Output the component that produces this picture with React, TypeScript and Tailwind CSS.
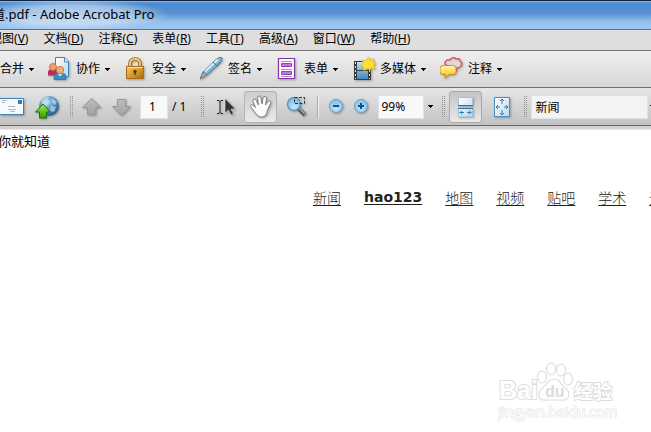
import type { ReactNode } from "react";

const UI_FONT = "font-['Noto_Sans','Noto_Sans_CJK_SC',sans-serif]";

function Caret() {
  return (
    <svg width="5" height="3" viewBox="0 0 5 3" className="shrink-0" aria-hidden="true" shapeRendering="crispEdges">
      <path d="M0 0h5v1h-1v1h-1v1h-1v-1h-1v-1h-1z" fill="#000" />
    </svg>
  );
}

function Grip() {
  return (
    <svg width="3" height="22" viewBox="0 0 3 22" className="shrink-0" aria-hidden="true" shapeRendering="crispEdges">
      <path d="M.5 0v22M2.5 0v22" stroke="#909090" strokeDasharray="1 1" />
    </svg>
  );
}

function Defs() {
  return (
    <svg className="absolute h-0 w-0" aria-hidden="true">
      <defs>
        <linearGradient id="gold" x1="0" y1="0" x2="1" y2="1">
          <stop offset="0" stopColor="#f5cf73" /><stop offset=".5" stopColor="#d99a2b" /><stop offset="1" stopColor="#a86808" />
        </linearGradient>
        <linearGradient id="blue" x1="0" y1="0" x2="0" y2="1">
          <stop offset="0" stopColor="#c4e0f2" /><stop offset="1" stopColor="#3f88bd" />
        </linearGradient>
        <linearGradient id="page" x1="0" y1="0" x2="1" y2="1">
          <stop offset="0" stopColor="#fff" /><stop offset="1" stopColor="#b9d9ee" />
        </linearGradient>
        <linearGradient id="green" x1="0" y1="0" x2="0" y2="1">
          <stop offset="0" stopColor="#a5f04a" /><stop offset="1" stopColor="#2d9a06" />
        </linearGradient>
        <linearGradient id="yellow" x1="0" y1="0" x2="0" y2="1">
          <stop offset="0" stopColor="#fff7a8" /><stop offset="1" stopColor="#fbb40c" />
        </linearGradient>
        <linearGradient id="grey" x1="0" y1="0" x2="0" y2="1">
          <stop offset="0" stopColor="#bdbdbd" /><stop offset="1" stopColor="#a2a2a2" />
        </linearGradient>
        <radialGradient id="globe" cx=".4" cy=".3" r=".7">
          <stop offset="0" stopColor="#b5d9f0" /><stop offset=".5" stopColor="#5d9ccc" /><stop offset="1" stopColor="#205c94" />
        </radialGradient>
        <radialGradient id="lens" cx=".5" cy=".7" r=".7">
          <stop offset="0" stopColor="#c8e8fa" /><stop offset="1" stopColor="#75b2db" />
        </radialGradient>
      </defs>
    </svg>
  );
}

function Icon({ w, h, children }: { w: number; h: number; children: ReactNode }) {
  return (
    <svg
      width={w}
      height={h}
      viewBox={`0 0 ${w} ${h}`}
      fill="none"
      aria-hidden="true"
      className="shrink-0 drop-shadow-[1px_1px_1px_rgba(0,0,0,0.3)]"
    >
      {children}
    </svg>
  );
}

const CollabIcon = () => (
  <Icon w={24} h={24}>
    <path d="M7.500 .500h9l4 4v15h-13z" fill="url(#page)" stroke="#3f88bd" />
    <path d="M16.500 .500v4.500h4" fill="#e8f4fb" stroke="#3f88bd" />
    <path d="M0 18.500v-3q0-3 3-3h4q3 0 3 3v3z" fill="#c02a5c" />
    <circle cx="5" cy="10" r="3.500" fill="#eca36f" stroke="#b96331" strokeWidth=".7" />
    <path d="M6 22.500v-3q0-3 3-3h6q3 0 3 3v3z" fill="#3d8dc4" stroke="#236998" strokeWidth=".6" />
    <path d="M9.500 16.500l2.500 3 2.500-3z" fill="#d8ebf5" />
    <circle cx="12" cy="13" r="3.700" fill="#f0ae7b" stroke="#b96331" strokeWidth=".7" />
  </Icon>
);

const LockIcon = () => (
  <Icon w={24} h={24}>
    <path d="M6 11V7q0-5 5-5t5 5v4" stroke="#9a681b" strokeWidth="3.600" />
    <path d="M6 11V7q0-5 5-5t5 5v4" stroke="#ecd184" strokeWidth="1.800" />
    <path d="M2.500 9.500h17v12h-17z" fill="url(#gold)" stroke="#a86b18" />
    <path d="M3.500 10.500h15" stroke="#ffe6a1" />
    <circle cx="11" cy="14.500" r="1.700" fill="#583806" />
    <path d="M11 14v4" stroke="#583806" strokeWidth="1.500" />
  </Icon>
);

const PenIcon = () => (
  <Icon w={24} h={24}>
    <path d="M0 22l3-7L16 2.500q4-3 5.500-2t-.5 4.500L8 17z" fill="#82b4d6" stroke="#547184" strokeWidth=".9" />
    <path d="M5 14.500L18 2.500" stroke="#d8effc" strokeWidth="1.800" />
    <path d="M0 22l3-7 4 3z" fill="#a6a8aa" stroke="#666" strokeWidth=".6" />
    <path d="M13 5l4 4 3.500-4" stroke="#536776" />
  </Icon>
);

const FormIcon = () => (
  <Icon w={24} h={24}>
    <path d="M2.500 1.500h16v20h-16z" fill="#fff" stroke="#8434a8" strokeWidth="1.200" />
    <path d="M5 4.500h11M5 12.500h11M5 19.500h11" stroke="#9ba0aa" />
    <path d="M5.500 6.500h10v3h-10zM5.500 14.500h10v3h-10z" fill="#c473e0" stroke="#9940bd" />
  </Icon>
);

const FilmIcon = () => (
  <Icon w={24} h={24}>
    <path d="M2 4h17v19H2z" fill="#353d43" />
    <path d="M5 5h11v8H5zM5 14h11v8H5z" fill="url(#blue)" />
    <path d="M3.500 5v17M17.500 5v17" stroke="#e2e6e8" strokeDasharray="2 2" />
    <path d="M16.500 0l1.500 3.500 3.500-2-.5 4 3 .5-2.500 2.500 1.500 3.500-4-1-1 3-2.500-3-3.500 3v-4l-3.500-1 3-2-1.500-4 4 1z" fill="#ffe12e" stroke="#dda90c" strokeWidth=".5" />
  </Icon>
);

const CommentIcon = () => (
  <Icon w={24} h={24}>
    <path d="M8 9q-5-2-2-5 1-2 4-1 3-4 6-1 4-1 4 2 3 2 1 5-1 2-4 2l-1 3-2-3q-4 1-6-2z" fill="#fff0ed" fillOpacity=".35" stroke="#e9504b" strokeWidth="1.400" />
    <path d="M3 8.500h10q3 0 3 3v3q0 3-3 3H9l-4 4 .5-4H3q-3 0-3-3v-3q0-3 3-3z" fill="url(#yellow)" stroke="#c8820d" strokeWidth=".8" />
  </Icon>
);

function TaskButton({ icon, label }: { icon?: ReactNode; label: string }) {
  return (
    <button type="button" className="flex shrink-0 items-center">
      {icon && <span className="mr-1">{icon}</span>}
      <span className="mr-[5px] whitespace-nowrap">{label}</span>
      <Caret />
    </button>
  );
}

const menus: [string, string][] = [
  ["视图", "V"], ["文档", "D"], ["注释", "C"], ["表单", "R"],
  ["工具", "T"], ["高级", "A"], ["窗口", "W"], ["帮助", "H"],
];

const links = ["新闻", "hao123", "地图", "视频", "贴吧", "学术", "登录"];

function Watermark() {
  return (
    <svg
      width="122"
      height="62"
      viewBox="0 0 122 62"
      className="absolute right-[32px] bottom-[9px]"
      fill="#fff"
      stroke="#dedede"
      role="img"
      aria-label="Baidu 经验"
    >
      <g className="font-['Liberation_Sans','Noto_Sans_CJK_SC',sans-serif] font-bold" paintOrder="stroke" strokeWidth="2">
        <text x="2" y="38" fontSize="25">Bai</text>
        <text x="77" y="38" fontSize="19">经验</text>
        <text x="1" y="56" fontSize="14" strokeWidth="1" className="font-['Open_Sans',sans-serif] font-normal">jingyan.baidu.com</text>
      </g>
      <g strokeWidth="1.200">
        <ellipse cx="45" cy="16" rx="4.500" ry="6" />
        <ellipse cx="54" cy="8" rx="4.500" ry="6" />
        <ellipse cx="64" cy="9" rx="4.500" ry="6" />
        <ellipse cx="71" cy="18" rx="4.500" ry="6" />
        <path d="M57 18q5 0 8 6 7 5 7 9 0 7-9 6H50q-9 1-8-6 0-4 7-9 3-6 8-6z" />
      </g>
      <text x="48" y="36" fontSize="16" fill="#dcdcdc" stroke="none" className="font-['Liberation_Sans',sans-serif] font-bold">du</text>
    </svg>
  );
}

export default function App() {
  return (
    <div className={`relative flex min-h-screen flex-col overflow-hidden bg-white text-[12px] leading-4 text-black ${UI_FONT}`}>
      <Defs />

      <header className="flex h-[29px] items-center border-t border-[#11233e] bg-[radial-gradient(ellipse_100px_16px_at_70px_14px,rgba(225,235,247,0.75)_0%,rgba(225,235,247,0.55)_60%,transparent_100%),linear-gradient(#8fc0ee_0px,#4a8bd2_2px,#5590d0_12px,#96c1ec_21px,#9dc6ef_28px)]">
        <h1 className="-ml-2 pb-0.5 text-[13px] whitespace-nowrap">道.pdf - Adobe Acrobat Pro</h1>
      </header>

      <nav className="flex h-[22px] items-center gap-[15px] overflow-hidden border-y border-[#707070] bg-[#dedede] pb-0.5" aria-label="菜单">
        {menus.map(([name, key], i) => (
          <button key={name} type="button" className={`shrink-0 whitespace-nowrap ${i === 0 ? "-ml-[10px]" : ""}`}>
            {name}(<span className="underline">{key}</span>)
          </button>
        ))}
      </nav>

      <div className="flex h-[37px] items-center gap-[14px] overflow-hidden border-b border-[#707070] bg-linear-to-b from-[#f0f0f0] to-[#d6d6d6]">
        <TaskButton label="合并" />
        <TaskButton label="协作" icon={<CollabIcon />} />
        <TaskButton label="安全" icon={<LockIcon />} />
        <TaskButton label="签名" icon={<PenIcon />} />
        <TaskButton label="表单" icon={<FormIcon />} />
        <TaskButton label="多媒体" icon={<FilmIcon />} />
        <TaskButton label="注释" icon={<CommentIcon />} />
      </div>

      <div className="flex h-[38px] items-center overflow-hidden border-b border-[#686868] bg-linear-to-b from-[#e6e6e6] to-[#c3c3c3]">
        <button type="button" aria-label="邮件">
          <Icon w={26} h={20}>
            <path d="M-4 1.500h27.500v16H-4z" fill="#f6fafc" stroke="#4283b7" />
            <path d="M18 3h4v4h-4z" fill="#367eb8" />
            <path d="M2 3.500h5M2 5.500h3M8 9.500h7M8 12.500h8M10 14.500h5" stroke="#b4b9bd" />
          </Icon>
        </button>
        <button type="button" aria-label="上传" className="ml-2">
          <Icon w={28} h={24}>
            <circle cx="15" cy="11" r="10" fill="url(#globe)" />
            <path d="M7 6q4-5 8-4l-2 3 3 2-4 4-4-2zM18 3l5 4-2 3-3-3zM17 11l5 1-2 5-4-1z" fill="#d2e7f3" fillOpacity=".6" />
            <path d="M9 9l7 8h-3.500v6h-7v-6H1.500z" fill="url(#green)" stroke="#23700a" />
          </Icon>
        </button>
        <span className="mx-2"><Grip /></span>
        <div className="flex gap-2">
          <button type="button" aria-label="上一页">
            <Icon w={22} h={22}><path d="M10.500 2.500l9 9h-5v7h-8v-7h-5z" fill="url(#grey)" stroke="#989898" /></Icon>
          </button>
          <button type="button" aria-label="下一页">
            <Icon w={22} h={22}><path d="M10.500 19.500l9-9h-5v-7h-8v7h-5z" fill="url(#grey)" stroke="#989898" /></Icon>
          </button>
        </div>
        <label className="ml-[7px] flex items-center gap-1">
          <input aria-label="页码" defaultValue="1" className="h-[24px] w-[28px] border border-[#dbe3ef] bg-[#f8f8f8] pl-2" />
          <span className="whitespace-nowrap">/ 1</span>
        </label>
        <span className="mr-3 ml-[15px]"><Grip /></span>
        <button type="button" aria-label="选择工具">
          <Icon w={20} h={20}>
            <path d="M1 3.500h2l1 1 1-1h2M4 4v12M1 16.500h2l1-1 1 1h2" stroke="#222" />
            <path d="M9 1.500v14.500l3.500-3 2.500 5 2.500-1-2.500-5h4.500z" fill="#333" stroke="#f4f4f4" strokeWidth=".5" />
          </Icon>
        </button>
        <button type="button" aria-label="手形工具" aria-pressed="true" className="ml-2 flex h-8 w-[33px] shrink-0 items-center justify-center rounded-[3px] border border-[#b2b2b2] bg-linear-to-b from-[#cdcdcd] to-[#e9e9e9]">
          <Icon w={24} h={24}>
            <path d="M8 20L2.500 13q-2-3 0-3.500 1 0 4 3L4 6.500q-.5-2 1-2.500t2 1l2.500 5L8.500 3q0-2 1.500-2t2 2l1 6 1-6q.5-2 2-1.500t1.500 2.500L16.500 10l2.500-3.500q1-1.500 2-.5t.5 2.500L19 14l-2 6q-2 2-4.500 2T8 20z" fill="#fafafa" stroke="#7a7a7a" strokeWidth=".9" />
          </Icon>
        </button>
        <button type="button" aria-label="选框缩放" className="ml-2">
          <Icon w={24} h={24}>
            <path d="M13 13l7 7" stroke="#555" strokeWidth="4" />
            <path d="M14 13l6 6" stroke="#aaa" strokeWidth="1.500" />
            <circle cx="9" cy="9" r="6.500" fill="url(#lens)" stroke="#4e93c2" strokeWidth="1.200" />
            <path d="M9.500 2.500h10v6h-10z" stroke="#333" strokeDasharray="3 1.500" />
          </Icon>
        </button>
        <div className="ml-2 h-[22px] w-[2px] shrink-0 border-l border-[#aaa] bg-[#f1f1f1]" />
        <div className="ml-[9px] flex gap-2">
          {[false, true].map((plus) => (
            <button key={String(plus)} type="button" aria-label={plus ? "放大" : "缩小"}>
              <Icon w={17} h={17}>
                <circle cx="8" cy="8" r="6.500" fill="url(#lens)" stroke="#6a9fc6" />
                <circle cx="8" cy="8" r="5" stroke="#a9d3ed" />
                <path d={plus ? "M5 8h6M8 5v6" : "M5 8h6"} stroke="#06549a" strokeWidth="2" />
              </Icon>
            </button>
          ))}
        </div>
        <div className="ml-2 flex items-center gap-1">
          <input aria-label="缩放比例" defaultValue="99%" className="h-[24px] w-[46px] border border-[#dbe3ef] bg-[#f8f8f8] pl-[2px]" />
          <button type="button" aria-label="缩放选项"><Caret /></button>
        </div>
        <span className="mr-1 ml-[9px]"><Grip /></span>
        <button type="button" aria-label="适合宽度" aria-pressed="true" className="flex h-8 w-[33px] shrink-0 items-center justify-center rounded-[3px] border border-[#aaa] bg-linear-to-b from-[#c5c5c5] to-[#e9e9e9]">
          <Icon w={17} h={22}>
            <path d="M1.500 1.500h14v8h-14zM1.500 12.500h14v8h-14z" fill="url(#page)" stroke="#a0c5df" />
            <path d="M1 9.500h15M1 12.500h15" stroke="#2e719f" />
            <path d="M3 16.500h4M10 16.500h4M5 14.500l-2 2 2 2M12 14.500l2 2-2 2" stroke="#3577a9" />
          </Icon>
        </button>
        <button type="button" aria-label="适合页面" className="ml-3">
          <Icon w={16} h={22}>
            <path d="M.5 1.500h15v19H.5z" fill="url(#page)" stroke="#4b8fc0" />
            <path d="M8 3v5M8 14v5M2 11h4M10 11h4M6 5l2-2 2 2M6 17l2 2 2-2M4 9l-2 2 2 2M12 9l2 2-2 2" stroke="#3577a9" />
          </Icon>
        </button>
        <span className="mr-1 ml-[14px]"><Grip /></span>
        <input aria-label="查找" defaultValue="新闻" className="h-[24px] min-w-0 flex-1 border border-[#dbe3ef] bg-[#f3f3f1] pl-[3px]" />
        <button type="button" aria-label="查找选项" className="ml-[2px] w-[1px] shrink-0 overflow-hidden"><Caret /></button>
      </div>
      <div className="h-1 border-b border-[#e9e9e9] bg-[#d2d2d2]" />

      <main className="flex-1 font-['Noto_Sans_CJK_SC',sans-serif]">
        <p className="-ml-[2px] pt-[3px] text-[13px]">你就知道</p>
        <div className="mt-[38px] ml-[313px] flex gap-[23px] text-[14px] leading-5 text-[#222]">
          {links.map((name) => (
            <a
              key={name}
              href="#"
              className={`shrink-0 underline underline-offset-2 ${name === "hao123" ? "font-['DejaVu_Sans',sans-serif] font-bold" : "font-light"}`}
            >
              {name}
            </a>
          ))}
        </div>
      </main>

      <Watermark />
    </div>
  );
}
